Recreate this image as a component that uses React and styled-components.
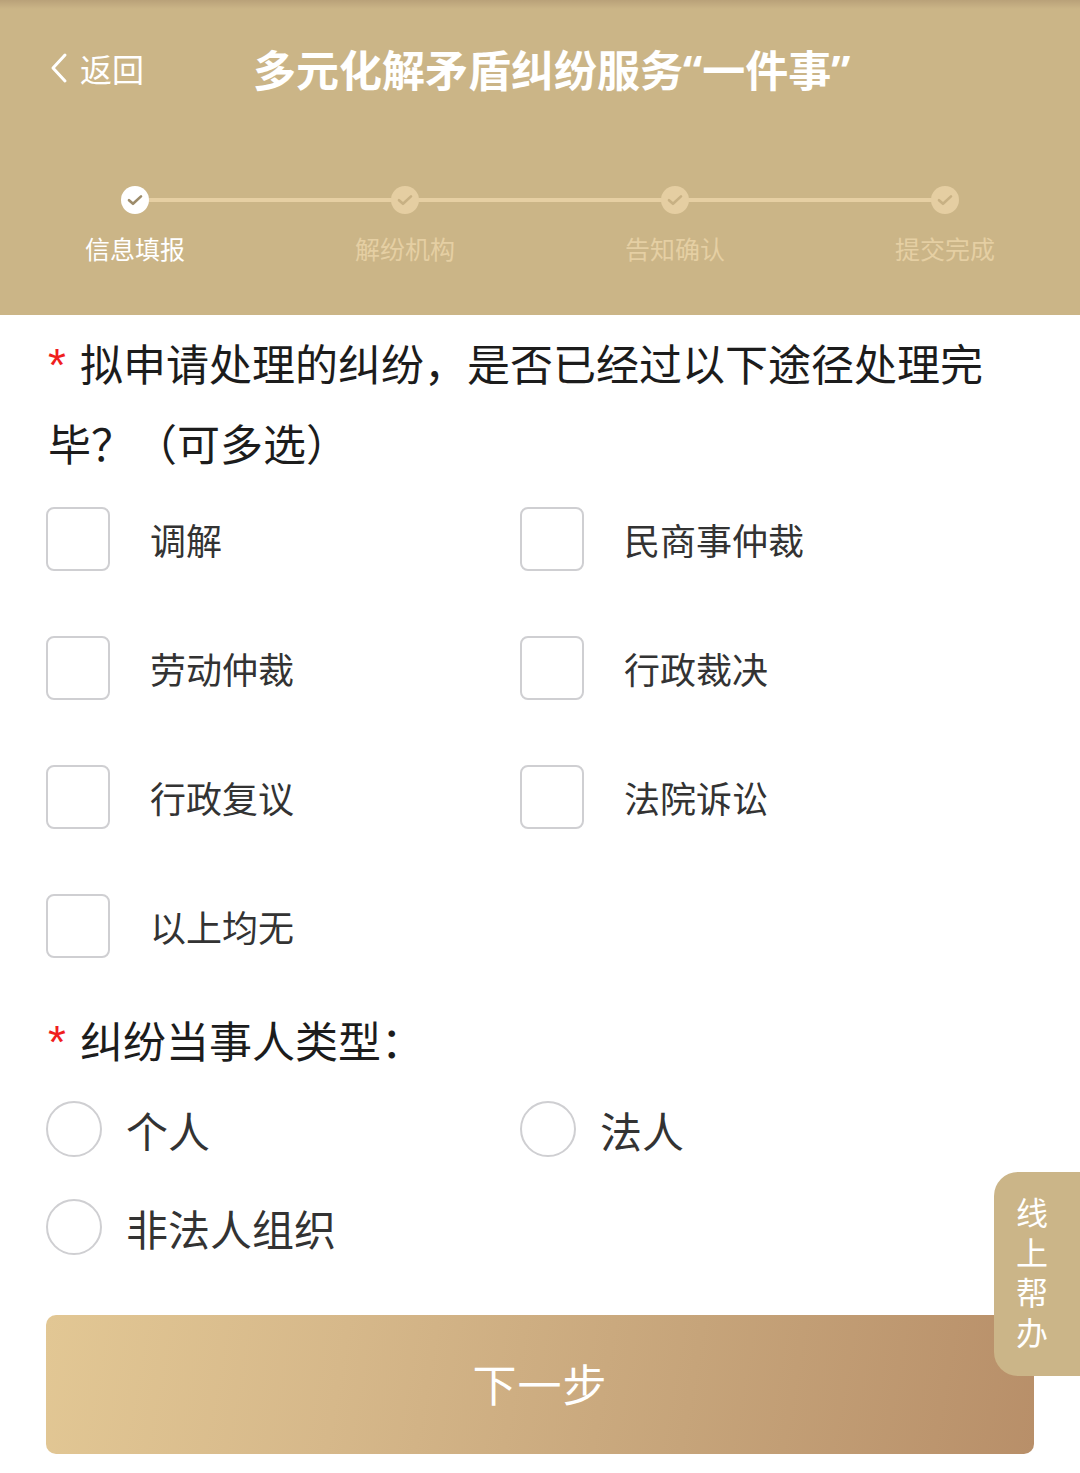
import React, { useState } from 'react';
import styled, { createGlobalStyle } from 'styled-components';

const GlobalStyle = createGlobalStyle`
  body {
    margin: 0;
    background: #fff;
    font-family: "Noto Sans CJK SC", "Noto Sans", sans-serif;
  }
`;

const Page = styled.div`
  position: relative;
  width: 1080px;
  min-height: 1473px;
  overflow: hidden;
  background: #fff;
`;

const Header = styled.header`
  height: 315px;
  background: linear-gradient(to bottom, #b9a179 0px, #cbb587 9px, #cbb587 100%);
  display: flex;
  flex-direction: column;
`;

const TopBar = styled.div`
  height: 136px;
  display: flex;
  align-items: center;
  padding-left: 50px;
  color: #fff;
`;

const Back = styled.div`
  display: flex;
  align-items: center;
  gap: 12px;
  font-size: 32px;
  width: 203px;
`;

const Title = styled.h1`
  margin: 0;
  font-family: "Noto Sans", "Noto Sans CJK SC", sans-serif;
  font-size: 43px;
  font-weight: 700;
  color: #fff;
`;

const Steps = styled.div`
  display: grid;
  grid-template-columns: repeat(4, 270px);
  margin-top: 50px;
`;

const Step = styled.div`
  position: relative;
  display: flex;
  flex-direction: column;
  align-items: center;

  &::before,
  &::after {
    content: '';
    position: absolute;
    top: 12px;
    height: 4px;
    background: #e6cfa3;
  }
  &::before {
    left: 0;
    width: 50%;
    display: ${(p) => (p.$first ? 'none' : 'block')};
  }
  &::after {
    right: 0;
    width: 50%;
    display: ${(p) => (p.$last ? 'none' : 'block')};
  }
`;

const Dot = styled.div`
  position: relative;
  z-index: 1;
  width: 28px;
  height: 28px;
  border-radius: 50%;
  background: ${(p) => (p.$active ? '#ffffff' : '#e5cea2')};
  display: flex;
  align-items: center;
  justify-content: center;
`;

const StepLabel = styled.div`
  margin-top: 17px;
  font-size: 25px;
  line-height: 34px;
  color: ${(p) => (p.$active ? '#ffffff' : '#e5cfa3')};
`;

const Body = styled.main`
  padding: 0 46px;
`;

const Question = styled.div`
  width: 952px;
  padding-left: 2px;
  font-size: 43px;
  line-height: 80px;
  color: #1c1c1c;
  margin-top: ${(p) => p.$top || 0}px;
`;

const Star = styled.span`
  display: inline-block;
  width: 32px;
  line-height: 0;
  color: #f01e1e;
  font-family: "Liberation Sans", sans-serif;
  font-size: 46px;
`;

const CheckGrid = styled.div`
  display: grid;
  grid-template-columns: 474px 474px;
  row-gap: 65px;
  margin-top: 25px;
`;

const Option = styled.label`
  display: flex;
  align-items: center;
  gap: ${(p) => p.$gap}px;
  color: #333;
  font-size: ${(p) => p.$size}px;
  cursor: pointer;
`;

const Box = styled.span`
  width: 60px;
  height: 60px;
  border: 2px solid ${(p) => (p.$on ? '#cbb587' : '#cfcfd2')};
  border-radius: 8px;
  display: flex;
  align-items: center;
  justify-content: center;
  background: ${(p) => (p.$on ? '#cbb587' : '#fff')};
`;

const RadioGrid = styled.div`
  display: grid;
  grid-template-columns: 474px 474px;
  grid-auto-rows: 80px;
  row-gap: 18px;
  margin-top: 10px;
`;

const Circle = styled.span`
  width: 52px;
  height: 52px;
  border: 2px solid #cfcfd2;
  border-radius: 50%;
  display: flex;
  align-items: center;
  justify-content: center;

  &::after {
    content: '';
    width: 26px;
    height: 26px;
    border-radius: 50%;
    background: #cbb587;
    display: ${(p) => (p.$on ? 'block' : 'none')};
  }
`;

const NextButton = styled.button`
  display: block;
  width: 988px;
  height: 139px;
  margin-top: 48px;
  border: none;
  border-radius: 10px;
  background: linear-gradient(100deg, #e2c794 0%, #d6b88a 30%, #c6a47a 65%, #b88f69 100%);
  color: #fff;
  font-family: "Noto Sans CJK SC", sans-serif;
  font-size: 44px;
  letter-spacing: 1px;
  padding: 0 0 4px;
  cursor: pointer;
`;

const HelpTab = styled.div`
  position: absolute;
  right: 0;
  top: 1172px;
  width: 86px;
  height: 204px;
  box-sizing: border-box;
  padding: 19px 0 0 22px;
  border-radius: 24px 0 0 24px;
  background: #cbb588;
  color: #fff;
  font-size: 32px;
  line-height: 40px;
`;

const TabChar = styled.div`
  width: 32px;
  height: 40px;
  text-align: center;
`;

const steps = ['信息填报', '解纷机构', '告知确认', '提交完成'];
const ways = ['调解', '民商事仲裁', '劳动仲裁', '行政裁决', '行政复议', '法院诉讼', '以上均无'];
const parties = ['个人', '法人', '非法人组织'];

function Check({ color }) {
  return (
    <svg width="16" height="12" viewBox="0 0 16 12" fill="none">
      <path d="M2 6.2 L6 9.8 L14 2.4" stroke={color} strokeWidth="2.6" strokeLinecap="round" strokeLinejoin="round" />
    </svg>
  );
}

export default function App() {
  const [picked, setPicked] = useState([]);
  const [party, setParty] = useState(null);

  const toggle = (w) =>
    setPicked((list) => (list.includes(w) ? list.filter((x) => x !== w) : [...list, w]));

  return (
    <Page>
      <GlobalStyle />
      <Header>
        <TopBar>
          <Back>
            <svg width="18" height="32" viewBox="0 0 18 32" fill="none">
              <path d="M15 3 L3 16 L15 29" stroke="#fff" strokeWidth="3" strokeLinecap="round" strokeLinejoin="round" />
            </svg>
            <span>返回</span>
          </Back>
          <Title>多元化解矛盾纠纷服务“一件事”</Title>
        </TopBar>
        <Steps>
          {steps.map((s, i) => (
            <Step key={s} $first={i === 0} $last={i === steps.length - 1}>
              <Dot $active={i === 0}>
                <Check color={i === 0 ? '#9d8c6b' : '#c8b184'} />
              </Dot>
              <StepLabel $active={i === 0}>{s}</StepLabel>
            </Step>
          ))}
        </Steps>
      </Header>

      <Body>
        <Question $top={7}>
          <Star>*</Star>拟申请处理的纠纷，是否已经过以下途径处理完毕？（可多选）
        </Question>
        <CheckGrid>
          {ways.map((w) => (
            <Option key={w} $gap={40} $size={36} onClick={() => toggle(w)}>
              <Box $on={picked.includes(w)}>
                {picked.includes(w) && <Check color="#fff" />}
              </Box>
              {w}
            </Option>
          ))}
        </CheckGrid>

        <Question $top={41}>
          <Star>*</Star>纠纷当事人类型：
        </Question>
        <RadioGrid>
          {parties.map((p) => (
            <Option key={p} $gap={24} $size={42} onClick={() => setParty(p)}>
              <Circle $on={party === p} />
              {p}
            </Option>
          ))}
        </RadioGrid>

        <NextButton type="button">下一步</NextButton>
      </Body>

      <HelpTab>
        {'线上帮办'.split('').map((c) => (
          <TabChar key={c}>{c}</TabChar>
        ))}
      </HelpTab>
    </Page>
  );
}
